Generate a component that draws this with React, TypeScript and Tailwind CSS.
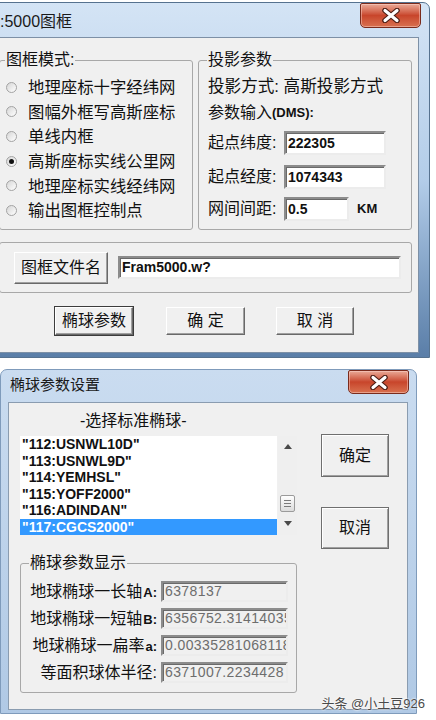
import React from "react";

const LIST_ITEMS = [
  '"112:USNWL10D"',
  '"113:USNWL9D"',
  '"114:YEMHSL"',
  '"115:YOFF2000"',
  '"116:ADINDAN"',
  '"117:CGCS2000"',
];

const MODES = [
  { label: "地理座标十字经纬网", checked: false },
  { label: "图幅外框写高斯座标", checked: false },
  { label: "单线内框", checked: false },
  { label: "高斯座标实线公里网", checked: true },
  { label: "地理座标实线经纬网", checked: false },
  { label: "输出图框控制点", checked: false },
];

const PARAMS = [
  { label: "地球椭球一长轴", suffix: "A:", value: "6378137" },
  { label: "地球椭球一短轴", suffix: "B:", value: "6356752.3141403558" },
  { label: "地球椭球一扁率", suffix: "a:", value: "0.00335281068118232" },
  { label: "等面积球体半径:", suffix: "", value: "6371007.2234428" },
];

function CloseButton({ className = "" }: { className?: string }) {
  return (
    <div
      className={
        "flex items-center justify-center rounded-b-[5px] rounded-t-[2px] border border-[#7a2b1c] bg-gradient-to-b from-[#e9a997] via-[#c8452b] to-[#d8704f] shadow-[inset_0_0_0_1px_rgba(255,220,210,0.45)] " +
        className
      }
    >
      <svg width="20" height="15" viewBox="0 0 20 15">
        <path d="M4 2.5 L16 12.5 M16 2.5 L4 12.5" stroke="#4a1d14" strokeWidth="5.5" strokeLinecap="round" />
        <path d="M4 2.5 L16 12.5 M16 2.5 L4 12.5" stroke="#ffffff" strokeWidth="3.2" strokeLinecap="round" />
      </svg>
    </div>
  );
}

function Radio({ checked }: { checked: boolean }) {
  return (
    <span className="flex h-[11px] w-[11px] shrink-0 items-center justify-center rounded-full border border-[#a3a3a3] bg-gradient-to-br from-[#d6d6d6] to-white">
      {checked && <span className="h-[5px] w-[5px] rounded-full bg-[#111]" />}
    </span>
  );
}

function Field({ value, className = "", disabled = false }: { value: string; className?: string; disabled?: boolean }) {
  return (
    <div
      className={
        "flex shrink-0 items-center overflow-hidden whitespace-nowrap border-2 border-b-[#ececec] border-l-[#8c8c8c] border-r-[#ececec] border-t-[#8c8c8c] pl-[2px] text-[14px] shadow-[inset_1px_1px_0_#6a6a6a] " +
        (disabled ? "bg-[#f0f0f0] font-normal tracking-[0.4px] text-[#6d6d6d] " : "bg-white font-bold text-[#111] ") +
        className
      }
    >
      {value}
    </div>
  );
}

function RaisedButton({ label, className = "", isDefault = false }: { label: string; className?: string; isDefault?: boolean }) {
  return (
    <div
      className={
        "flex items-center justify-center whitespace-pre border border-b-[#696969] border-l-white border-r-[#696969] border-t-white bg-[#f0f0f0] text-[16px] shadow-[inset_-1px_-1px_0_#a0a0a0] " +
        (isDefault ? "outline outline-[#3c3c3c] " : "") +
        className
      }
    >
      {label}
    </div>
  );
}

function MapFrameDialog() {
  return (
    <div className="ml-[-10px] mt-[2px] flex h-[356px] w-[440px] flex-col rounded-t-[7px] border border-[#56728f] bg-gradient-to-b from-[#d4e4f5] via-[#b3cde9] to-[#5a7ea8]">
      <div className="flex h-[34px] items-start justify-between">
        <div className="pl-[9px] pt-[9px] text-[16px] leading-[20px] text-[#1a1a1a]">:5000图框</div>
        <CloseButton className="mr-[8px] h-[25px] w-[61px]" />
      </div>

      <div className="mb-[4px] ml-[7px] mr-[10px] flex flex-1 flex-col border border-[#7d90a6] bg-[#f0f0f0]">
        <div className="mt-[10px] flex h-[182px] gap-[5px] pr-[6px]">
          <fieldset className="w-[194px] rounded-[3px] border border-[#a8a8a8]">
            <legend className="ml-[5px] px-[1px] text-[16px] leading-[24px]">图框模式:</legend>
            <div className="flex flex-col pt-[3px]">
              {MODES.map((m) => (
                <div key={m.label} className="flex h-[24.6px] items-center pl-[6px]">
                  <Radio checked={m.checked} />
                  <span className="ml-[11px] text-[16.4px] leading-[20px]">{m.label}</span>
                </div>
              ))}
            </div>
          </fieldset>

          <fieldset className="flex-1 rounded-[3px] border border-[#a8a8a8]">
            <legend className="ml-[8px] px-[1px] text-[16px] leading-[24px]">投影参数</legend>
            <div className="flex flex-col pl-[9px] pt-[3px] text-[16px]">
              <div className="flex h-[24px] items-center text-[16.6px]">投影方式: 高斯投影方式</div>
              <div className="flex h-[28px] items-center">
                参数输入<span className="text-[13px] font-bold">(DMS):</span>
              </div>
              <div className="mt-[4px] flex items-center">
                <span className="w-[76px]">起点纬度:</span>
                <Field value="222305" className="h-[24px] w-[102px]" />
              </div>
              <div className="mt-[10px] flex items-center">
                <span className="w-[76px]">起点经度:</span>
                <Field value="1074343" className="h-[24px] w-[102px]" />
              </div>
              <div className="mt-[8px] flex items-center">
                <span className="w-[76px]">网间间距:</span>
                <Field value="0.5" className="h-[24px] w-[65px]" />
                <span className="ml-[8px] text-[13px] font-bold">KM</span>
              </div>
            </div>
          </fieldset>
        </div>

        <div className="mr-[6px] mt-[12px] flex h-[51px] items-center rounded-[3px] border border-[#a8a8a8]">
          <RaisedButton label="图框文件名" className="ml-[14px] h-[32px] w-[94px]" />
          <Field value="Fram5000.w?" className="ml-[10px] h-[23px] w-[283px]" />
        </div>

        <div className="mt-[14px] flex h-[28px]">
          <RaisedButton label="椭球参数" isDefault className="ml-[56px] w-[78px]" />
          <RaisedButton label="确 定" className="ml-[33px] w-[79px]" />
          <RaisedButton label="取 消" className="ml-[31px] w-[78px]" />
        </div>
      </div>
    </div>
  );
}

function ScrollBar() {
  return (
    <div className="flex w-[19px] flex-col bg-[#efefef]">
      <div className="flex h-[20px] items-center justify-center">
        <svg width="8" height="5" viewBox="0 0 8 5">
          <polygon points="0,5 8,5 4,0" fill="#4a4a4a" />
        </svg>
      </div>
      <div className="flex flex-1 flex-col justify-end">
        <div className="mx-[2px] flex h-[17px] flex-col items-center justify-center gap-[2px] rounded-[2px] border border-[#9b9b9b] bg-gradient-to-b from-white to-[#dcdcdc]">
          <span className="h-px w-[7px] bg-[#7a7a7a]" />
          <span className="h-px w-[7px] bg-[#7a7a7a]" />
          <span className="h-px w-[7px] bg-[#7a7a7a]" />
        </div>
      </div>
      <div className="flex h-[23px] items-center justify-center">
        <svg width="8" height="5" viewBox="0 0 8 5">
          <polygon points="0,0 8,0 4,5" fill="#4a4a4a" />
        </svg>
      </div>
    </div>
  );
}

function EllipsoidDialog() {
  return (
    <div className="mt-[11px] flex h-[345px] w-[417px] flex-col rounded-t-[7px] border border-[#7f9bbb] bg-gradient-to-b from-[#cadcf0] to-[#b0c9e5]">
      <div className="flex h-[32px] items-start justify-between">
        <div className="pl-[9px] pt-[5px] text-[15px] leading-[20px] text-[#1a1a1a]">椭球参数设置</div>
        <CloseButton className="mr-[7px] h-[24px] w-[61px]" />
      </div>

      <div className="mb-[3px] ml-[7px] mr-[8px] flex flex-1 border border-[#8a9cb0] bg-[#f0f0f0]">
        <div className="flex w-[288px] flex-col pl-[11px]">
          <div className="mt-[6px] flex h-[24px] items-center pl-[60px] text-[16px]">-选择标准椭球-</div>
          <div className="mt-[3px] flex h-[99px] gap-px">
            <div className="flex w-[257px] flex-col bg-white">
              {LIST_ITEMS.map((item, i) => (
                <div
                  key={item}
                  className={
                    "flex h-[16.5px] items-center pl-[2px] text-[14px] font-bold leading-[16px] " +
                    (i === LIST_ITEMS.length - 1 ? "bg-[#3399ff] text-white" : "text-[#111]")
                  }
                >
                  {item}
                </div>
              ))}
            </div>
            <ScrollBar />
          </div>

          <fieldset className="mt-[16px] h-[142px] w-[277px] rounded-[3px] border border-[#a8a8a8]">
            <legend className="ml-[8px] px-[1px] text-[16px] leading-[24px]">椭球参数显示</legend>
            <div className="flex flex-col gap-[6px] pt-[6px]">
              {PARAMS.map((p) => (
                <div key={p.label} className="flex h-[21px] items-center">
                  <span className="flex w-[136px] shrink-0 items-baseline justify-end whitespace-nowrap text-[16px]">
                    {p.label}
                    {p.suffix && <span className="ml-[1px] text-[13px] font-bold">{p.suffix}</span>}
                  </span>
                  <Field value={p.value} disabled className="ml-[4px] h-[21px] w-[127px]" />
                </div>
              ))}
            </div>
          </fieldset>
        </div>

        <div className="ml-[24px] flex w-[68px] flex-col">
          <div className="mt-[31px] flex h-[43px] items-center justify-center border border-[#6f6f6f] bg-[#f0f0f0] text-[16px] shadow-[inset_1px_1px_0_#fff,inset_-1px_-1px_0_#a0a0a0]">
            确定
          </div>
          <div className="mt-[30px] flex h-[42px] items-center justify-center border border-[#6f6f6f] bg-[#f0f0f0] text-[16px] shadow-[inset_1px_1px_0_#fff,inset_-1px_-1px_0_#a0a0a0]">
            取消
          </div>
        </div>
      </div>
    </div>
  );
}

export default function App() {
  return (
    <div className="relative h-[720px] w-[436px] overflow-hidden bg-white font-['Liberation_Sans','Noto_Sans_CJK_SC',sans-serif] text-[#111]">
      <MapFrameDialog />
      <EllipsoidDialog />
      <div className="absolute bottom-[8px] right-[11px] text-[13px] leading-[16px] text-[#4a4a4a] [text-shadow:0_0_2px_#fff,0_0_2px_#fff]">
        头条 @小土豆926
      </div>
    </div>
  );
}
